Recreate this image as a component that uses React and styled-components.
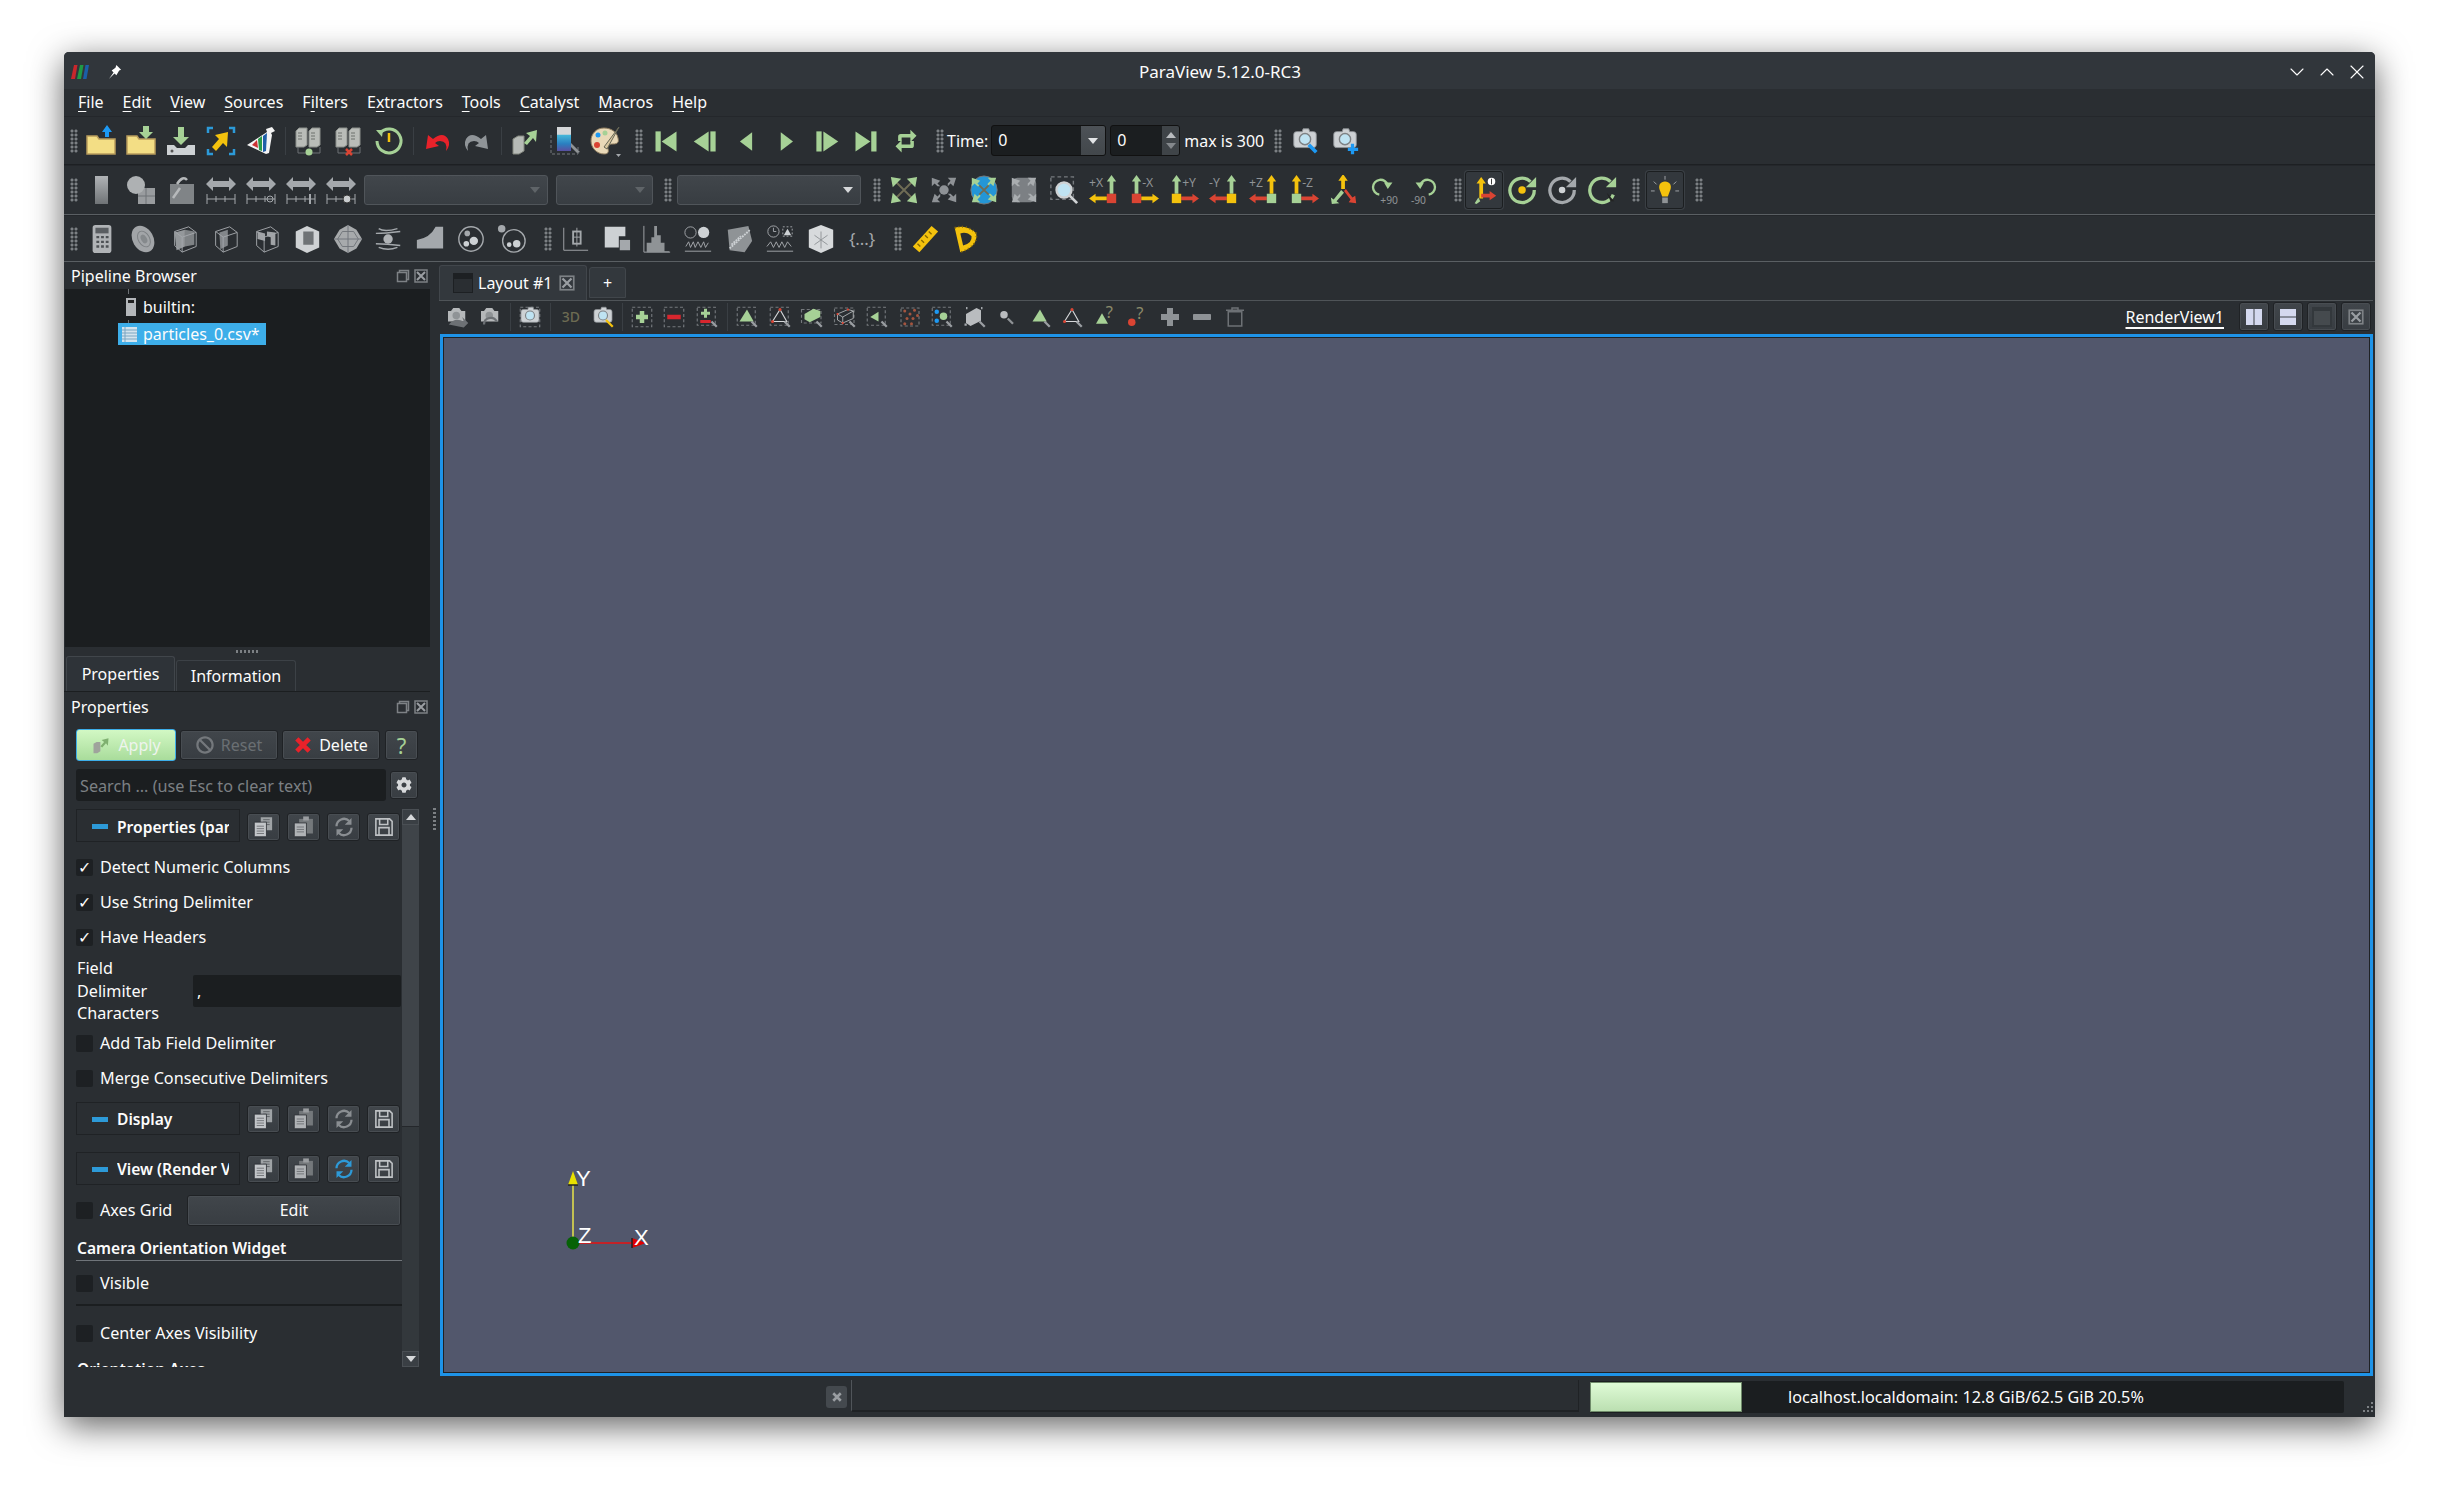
import React from 'react'
import styled, { createGlobalStyle } from 'styled-components'
import { ChevronDown, ChevronUp, X } from 'lucide-react'
import { FaCog, FaBan } from 'react-icons/fa'

const GREEN = '#a6d196'
const YEL = '#f4c20d'
const BLUE = '#1d99f3'
const RED = '#da4433'
const GREY = '#a4a8ac'
const LIGHT = '#cdd1d4'
const DIM = '#8f9396'

const Global = createGlobalStyle`
  html, body { margin: 0; padding: 0; background: #fff; }
  body { font-family: "Noto Sans", sans-serif; font-size: 16px; line-height: 22px; color: #fcfcfc; }
  text { font-family: "Noto Sans", sans-serif; }
  u { text-underline-offset: 3px; text-decoration-thickness: 1px; }
`

const Page = styled.div`
  width: 2440px;
  height: 1494px;
  padding: 52px 65px 77px 64px;
  box-sizing: border-box;
  overflow: hidden;
`
const Win = styled.div`
  width: 2311px;
  height: 1365px;
  display: flex;
  flex-direction: column;
  background: #2a2e32;
  border-radius: 5px 5px 0 0;
  box-shadow: 0 9px 34px rgba(0, 0, 0, 0.62), inset 0 1px 0 #5a5f63;
  overflow: hidden;
`
const TitleBar = styled.div`
  height: 37px;
  flex: none;
  display: grid;
  grid-template-columns: 1fr auto 1fr;
  align-items: center;
  background: #31363b;
  padding: 2px 6px 0 7px;
  box-sizing: border-box;
  font-size: 17px;
`
const TitleLeft = styled.div`
  display: flex;
  align-items: center;
  gap: 18px;
`
const TitleBtns = styled.div`
  display: flex;
  justify-content: flex-end;
  gap: 6px;
`
const MenuBar = styled.div`
  height: 27px;
  flex: none;
  display: flex;
  align-items: center;
  gap: 19px;
  padding: 0 0 2px 14px;
  box-sizing: border-box;
`
const Toolbar = styled.div`
  height: ${p => p.$h}px;
  flex: none;
  box-sizing: border-box;
  display: flex;
  align-items: center;
  padding-left: 3px;
  border-bottom: 1px solid ${p => p.$line};
  border-top: 1px solid #24272b;
`
const Grip = styled.div`
  width: 8px;
  height: 24px;
  flex: none;
  margin: ${p => p.$m || '0 3px'};
  background: radial-gradient(circle at center, #7c8084 1.4px, transparent 1.7px) 0 0 / 4px 4px;
`
const Slot = styled.div`
  width: ${p => p.$w || 40}px;
  flex: none;
  display: flex;
  align-items: center;
  justify-content: center;
`
const BoxedSlot = styled(Slot)`
  width: 38px;
  height: 38px;
  box-sizing: border-box;
  background: #33383d;
  border: 1px solid #1b1e20;
  border-radius: 3px;
  box-shadow: 0 0 0 1px #3a3f44;
`
const Sep = styled.div`
  width: ${p => p.$w || 8}px;
  flex: none;
  height: 28px;
  background: linear-gradient(#3a3f44, #3a3f44) center / 1px 100% no-repeat;
`
const Combo = styled.div`
  width: ${p => p.$w}px;
  height: 30px;
  flex: none;
  margin: ${p => p.$m};
  box-sizing: border-box;
  background: linear-gradient(#41464b, #383d42);
  border: 1px solid #50555a;
  border-radius: 3px;
  display: flex;
  align-items: center;
  justify-content: flex-end;
  padding-right: 7px;
`
const Caret = styled.div`
  width: 0;
  height: 0;
  border-left: 5px solid transparent;
  border-right: 5px solid transparent;
  border-top: 6px solid ${p => p.$c};
`
const ToolText = styled.span`
  flex: none;
  margin: ${p => p.$m};
`
const TimeCombo = styled.div`
  width: 115px;
  height: 31px;
  flex: none;
  box-sizing: border-box;
  display: flex;
  margin: 0 4px 0 3px;
  background: #1b1e20;
  border: 1px solid #111;
  border-radius: 3px;
  overflow: hidden;
`
const TimeValue = styled.div`
  flex: 1;
  padding: 3px 0 0 6px;
`
const TimeArrow = styled.div`
  width: 24px;
  background: linear-gradient(#4d5257, #42474b);
  display: flex;
  align-items: center;
  justify-content: center;
`
const Spin = styled(TimeCombo)`
  width: 70px;
  margin: 0 4px 0 0;
`
const SpinBtns = styled.div`
  width: 17px;
  background: #3f4448;
  display: flex;
  flex-direction: column;
  align-items: center;
  justify-content: center;
  gap: 5px;
`
const CaretUp = styled(Caret)`
  border-top: none;
  border-bottom: 6px solid ${p => p.$c};
`
const Main = styled.div`
  flex: 1;
  min-height: 0;
  display: flex;
`
const LeftDock = styled.div`
  width: 366px;
  flex: none;
  display: flex;
  flex-direction: column;
`
const DockTitle = styled.div`
  height: ${p => p.$h}px;
  flex: none;
  box-sizing: border-box;
  display: flex;
  align-items: center;
  justify-content: space-between;
  padding: 1px 1px 0 7px;
`
const DockIcons = styled.div`
  display: flex;
  gap: 2px;
`
const Tree = styled.div`
  height: 358px;
  flex: none;
  margin-left: 1px;
  background: #1b1e20;
  position: relative;
`
const TreeLine = styled.div`
  position: absolute;
  left: 63px;
  top: ${p => p.$t}px;
  width: 1px;
  height: ${p => p.$h}px;
  background: #6d7175;
`
const TreeRow = styled.div`
  height: ${p => p.$h}px;
  display: flex;
  align-items: center;
  gap: ${p => p.$gap}px;
  margin: ${p => p.$m};
  width: ${p => p.$w};
  background: ${p => p.$sel ? '#3daee9' : 'transparent'};
  padding-left: 4px;
  box-sizing: border-box;
`
const HSplit = styled.div`
  height: 9px;
  flex: none;
  display: flex;
  justify-content: center;
  align-items: center;
`
const HDots = styled.div`
  width: 22px;
  height: 3px;
  background: repeating-linear-gradient(90deg, #7c8084 0 2px, transparent 2px 4px);
`
const TabRow = styled.div`
  height: 36px;
  flex: none;
  display: flex;
  align-items: flex-end;
  padding-left: 2px;
  gap: 1px;
  border-bottom: 1px solid #1b1e20;
  box-sizing: border-box;
`
const DockTab = styled.div`
  height: ${p => p.$on ? 35 : 31}px;
  width: ${p => p.$w}px;
  box-sizing: border-box;
  display: flex;
  align-items: center;
  justify-content: center;
  background: ${p => p.$on ? '#2e3338' : '#2a2e32'};
  border: 1px solid ${p => p.$on ? '#41464b' : '#3c4146'};
  border-bottom: none;
  border-radius: 3px 3px 0 0;
`
const Props = styled.div`
  flex: 1;
  padding-left: 12px;
  min-height: 0;
  font-size: 16.2px;
`
const BtnRow = styled.div`
  display: flex;
  gap: 4px;
  margin-top: 9px;
  height: 32px;
  align-items: center;
`
const PushBtn = styled.div`
  width: ${p => p.$w}px;
  height: ${p => p.$h || 30}px;
  flex: none;
  box-sizing: border-box;
  display: flex;
  align-items: center;
  justify-content: center;
  gap: 7px;
  background: linear-gradient(#41464b, #383d42);
  border: 1px solid #1f2225;
  box-shadow: inset 0 0 0 1px #484d52;
  border-radius: 3px;
  color: ${p => p.$c || '#fcfcfc'};
  font-size: ${p => p.$fs || 16}px;
  margin: ${p => p.$m || 0};
`
const ApplyBtn = styled(PushBtn)`
  background: linear-gradient(#d2f8c4, #a9dc9b);
  border: 1px solid #3daee9;
  box-shadow: none;
  color: #eef4ee;
`
const SearchRow = styled.div`
  display: flex;
  align-items: center;
  gap: 4px;
  margin-top: 8px;
`
const SearchInput = styled.div`
  width: 310px;
  height: 32px;
  box-sizing: border-box;
  background: #1b1e20;
  border-radius: 3px;
  display: flex;
  align-items: center;
  padding: 1px 0 0 4px;
  color: #7c8084;
`
const ScrollWrap = styled.div`
  display: flex;
  margin-top: 8px;
  height: 558px;
`
const Content = styled.div`
  width: 326px;
  flex: none;
  overflow: hidden;
`
const Scrollbar = styled.div`
  width: 17px;
  flex: none;
  background: #33383c;
  display: flex;
  flex-direction: column;
`
const ScrollEnd = styled.div`
  height: 16px;
  flex: none;
  box-sizing: border-box;
  display: flex;
  align-items: center;
  justify-content: center;
  background: #3a3f44;
  border: 1px solid #4a4f54;
`
const ScrollHandle = styled.div`
  height: 301px;
  flex: none;
  background: #3f4449;
  border-bottom: 1px solid #24272b;
`
const ScrollTrack = styled.div`
  flex: 1;
`
const Group = styled.div`
  display: flex;
  align-items: center;
  margin-top: ${p => p.$mt || 0}px;
  height: 33px;
`
const GroupHead = styled.div`
  width: 164px;
  height: 33px;
  flex: none;
  box-sizing: border-box;
  border: 1px solid #1f2225;
  display: flex;
  align-items: center;
  gap: 9px;
  padding: 2px 0 0 15px;
  margin-right: 7px;
`
const GroupLabel = styled.div`
  width: 112px;
  font-size: 15.6px;
  font-weight: 600;
  overflow: hidden;
  white-space: nowrap;
`
const Minus = styled.div`
  width: 16px;
  height: 5px;
  flex: none;
  background: #2d9ad8;
`
const GroupBtns = styled.div`
  display: flex;
  gap: 7px;
  margin-top: 2px;
`
const CheckList = styled.div`
  margin-top: 7.5px;
`
const CheckRow = styled.div`
  height: 35px;
  display: flex;
  align-items: center;
  gap: 7px;
`
const CheckBox = styled.div`
  width: 17px;
  height: 17px;
  flex: none;
  background: #1d2023;
  border-radius: 2px;
  display: flex;
  align-items: center;
  justify-content: center;
  font-size: 16px;
  line-height: 17px;
`
const FieldRow = styled.div`
  display: flex;
  align-items: center;
  height: 69px;
  margin-top: 2px;
`
const FieldLabel = styled.div`
  width: 116px;
  flex: none;
  line-height: 22.5px;
  padding-left: 1px;
`
const FieldInput = styled.div`
  width: 208px;
  height: 32px;
  background: #1b1e20;
  border-radius: 2px;
  padding-left: 4px;
  box-sizing: border-box;
  line-height: 32px;
`
const AxesRow = styled(CheckRow)`
  height: 31px;
  margin-top: 10px;
`
const SectionHead = styled.div`
  height: 35px;
  box-sizing: border-box;
  line-height: 44px;
  font-size: 15.6px;
  font-weight: 600;
  padding-left: 1px;
  border-bottom: 1px solid #70757a;
  margin-bottom: 5px;
`
const ClipHead = styled.div`
  font-size: 15.6px;
  font-weight: 600;
  padding-left: 1px;
  margin-top: 7px;
`
const Rule = styled.div`
  height: 2px;
  background: #1b1e20;
  margin: 3px 0 10px;
`
const VSplit = styled.div`
  width: 9px;
  flex: none;
  display: flex;
  align-items: center;
  justify-content: center;
`
const VDots = styled.div`
  width: 3px;
  height: 22px;
  background: repeating-linear-gradient(#7c8084 0 2px, transparent 2px 4px);
`
const Center = styled.div`
  flex: 1;
  min-width: 0;
  display: flex;
  flex-direction: column;
  padding-right: 2px;
`
const ViewTabs = styled.div`
  height: 38px;
  flex: none;
  display: flex;
  align-items: flex-end;
  gap: 2px;
`
const ViewTab = styled.div`
  width: 148px;
  height: 35px;
  box-sizing: border-box;
  background: #33383d;
  border: 1px solid #41464b;
  border-bottom: none;
  border-radius: 3px 3px 0 0;
  display: flex;
  align-items: center;
  gap: 5px;
  padding-left: 13px;
  white-space: nowrap;
`
const AddTab = styled.div`
  width: 37px;
  height: 31px;
  margin-bottom: 2px;
  box-sizing: border-box;
  background: #33383d;
  border: 1px solid #41464b;
  border-radius: 3px 3px 0 0;
  display: flex;
  align-items: center;
  justify-content: center;
`
const TabIcon = styled.div`
  width: 20px;
  height: 20px;
  flex: none;
  box-sizing: border-box;
  background: #2a2e32;
  border-top: 6px solid #1d2023;
  border-left: 1px solid #1d2023;
  border-right: 1px solid #1d2023;
  border-bottom: 1px solid #1d2023;
`
const RenderBar = styled.div`
  height: 34px;
  flex: none;
  box-sizing: border-box;
  display: flex;
  align-items: center;
  padding: 0 2px 2px 2px;
  border-top: 1px solid #4f5458;
`
const ThreeD = styled.div`
  width: 32.5px;
  flex: none;
  text-align: center;
  color: #6d6b52;
  font-size: 14px;
  font-weight: 500;
`
const ViewName = styled.div`
  margin-left: auto;
  margin-right: 15px;
  text-decoration: underline;
  text-decoration-thickness: 2px;
  text-underline-offset: 4px;
`
const ViewBtns = styled.div`
  display: flex;
  gap: 4px;
`
const Viewport = styled.div`
  flex: 1;
  min-height: 0;
  margin-left: 1px;
  box-sizing: border-box;
  background: #52576c;
  border: 3px solid #1e93e8;
  box-shadow: inset 0 0 0 1px #1f2225;
  position: relative;
`
const AxesOverlay = styled.svg`
  position: absolute;
  left: 110px;
  bottom: 108px;
  text { font-family: "Liberation Sans", sans-serif; font-size: 22px; fill: #fff; }
`
const Status = styled.div`
  height: 41px;
  flex: none;
  display: flex;
  align-items: center;
`
const StatusClose = styled.div`
  width: 21px;
  height: 22px;
  margin-left: 762px;
  flex: none;
  background: #44494e;
  border-radius: 3px;
  display: flex;
  align-items: center;
  justify-content: center;
`
const StatusMsg = styled.div`
  width: 728px;
  height: 32px;
  margin: -1px 0 0 4px;
  box-sizing: border-box;
  border-left: 1px solid #50555a;
  border-bottom: 2px solid #1f2225;
  border-right: 1px solid #1f2225;
  flex: none;
`
const Memory = styled.div`
  width: 754px;
  height: 32px;
  margin-left: 11px;
  flex: none;
  background: #1b1e20;
  display: flex;
  align-items: center;
  border-radius: 2px;
`
const MemoryFill = styled.div`
  width: 152px;
  height: 30px;
  flex: none;
  background: linear-gradient(#dffbd6, #bbdfb1);
  border: 1px solid #6f8a6a;
  box-sizing: border-box;
`
const MemoryText = styled.div`
  margin-left: 46px;
  font-size: 16.2px;
`
const ResizeGrip = styled.svg`
  margin: 22px 0 0 15px;
  flex: none;
`

const Svg = ({ s = 32, children }) => <svg width={s} height={s} viewBox="0 0 32 32">{children}</svg>

const T = ({ x, y, c = DIM, z = 13, children }) => <text x={x} y={y} fontSize={z} fill={c}>{children}</text>

// arrow pointing up, shaft x, from y0 to y1
const up = (x, y0, y1, c) => <path d={`M${x - 2} ${y0}V${y1 + 6}h-3l5-7 5 7h-3V${y0}z`} fill={c} />
const left = (x0, x1, y, c) => <path d={`M${x0} ${y - 2}H${x1 + 6}v-3l-7 5 7 5v-3H${x0}z`} fill={c} />
const right = (x0, x1, y, c) => <path d={`M${x0} ${y - 2}H${x1 - 6}v-3l7 5-7 5v-3H${x0}z`} fill={c} />

const axisIcon = (label, labelLeft, upC, hC, boxC) => labelLeft ? (
  <>
    <T x={0} y={13}>{label}</T>
    {up(24, 20, 1, upC)}
    {left(19, 1, 25, hC)}
    <rect x={19} y={20} width={10} height={10} fill={boxC} />
  </>
) : (
  <>
    {up(8, 20, 1, upC)}
    <T x={14} y={13}>{label}</T>
    {right(13, 31, 25, hC)}
    <rect x={3} y={20} width={10} height={10} fill={boxC} />
  </>
)

const folder = (arrow) => (
  <>
    <path d="M2 11h10l2 3h16v15H2z" fill="#f3de85" stroke="#b89c5c" strokeWidth="1.5" />
    {arrow}
  </>
)
const server = (x) => (
  <g>
    <path d={`M${x} 6l3-3h8v17l-3 2h-8z`} fill="#b9bcb8" stroke="#8b8f8b" />
    <path d={`M${x + 2} 8h4M${x + 2} 11h4M${x + 2} 14h4`} stroke="#6d706c" />
  </g>
)
const cubeOutline = <path d="M6 8l15-5 8 6v15l-15 6-8-7z M6 8l8 6v16 M14 14l15-5" fill="none" stroke={GREY} strokeWidth="1" />
const ruler = (extra) => (
  <>
    <path d="M8 3L1 10l7 7v-4h16v4l7-7-7-7v4H8z" fill={GREY} />
    <path d="M2 25h28M2 20v10M30 20v10M11 22v6M20 22v6" stroke={GREY} fill="none" />
    {extra}
  </>
)
const copyDocs = (
  <Svg s={26}>
    <path d="M12 4h14v16H12z" fill="#9fa3a6" />
    <path d="M15 7h8M15 10h8M15 13h8" stroke="#55595c" />
    <path d="M4 10h15v18H4z" fill="#c2c5c8" stroke="#2a2e32" />
    <path d="M7 15h9M7 18h9M7 21h9M7 24h9" stroke="#66696c" />
  </Svg>
)
const pasteDocs = (
  <Svg s={26}>
    <path d="M10 6h17v18H10z" fill="#74787b" />
    <path d="M15 3h7v5h-7z" fill="#9a9da0" />
    <path d="M4 11h15v17H4z" fill="#b0b3b6" stroke="#2a2e32" />
    <path d="M7 16h9M7 19h9M7 22h9" stroke="#66696c" />
  </Svg>
)
const refresh = (c) => (
  <Svg s={24}>
    <path d="M6 15a10 10 0 0 1 17-7" fill="none" stroke={c} strokeWidth="3" />
    <path d="M26 4v9h-9z" fill={c} />
    <path d="M26 17a10 10 0 0 1-17 7" fill="none" stroke={c} strokeWidth="3" />
    <path d="M6 28v-9h9z" fill={c} />
  </Svg>
)
const floppy = (
  <Svg s={20}>
    <path d="M3 3h22l4 4v22H3z M9 3v9h13V3 M8 29V17h16v12" fill="none" stroke="#bfc2c5" strokeWidth="2.5" />
  </Svg>
)
const floatIcon = (
  <Svg s={16}>
    <path d="M5 9h18v18H5z M9 9V5h18v18h-4" fill="none" stroke="#7d8185" strokeWidth="3" />
  </Svg>
)
const closeIcon = (s = 16) => (
  <Svg s={s}>
    <rect x="4" y="4" width="24" height="24" fill="none" stroke="#7d8185" strokeWidth="3" />
    <path d="M8 8l16 16M24 8L8 24" stroke="#9a9ea2" strokeWidth="4" />
  </Svg>
)
const redX = (
  <Svg s={18}>
    <path d="M5 5l22 22M27 5L5 27" stroke="#e8222a" strokeWidth="8" />
  </Svg>
)
const dashed = (d = 'M3 3h26v26H3z') => <path d={d} fill="none" stroke="#75797d" strokeDasharray="4 3" strokeWidth="1.5" />
const handle = <path d="M22 22l7 7" stroke="#9a9ea2" strokeWidth="3" />
const tri = (c) => <path d="M16 6l9 16H6z" fill={c} />
const triOutline = (
  <>
    <path d="M16 6l9 16H6z" fill="none" stroke="#d5d7d9" strokeWidth="1.5" />
    <circle cx="16" cy="6" r="2" fill={RED} />
    <circle cx="6" cy="22" r="2" fill={RED} />
  </>
)
const camera = (
  <>
    <path d="M7 6h6l1-3h6l1 3h4q3 0 3 3v11q0 3-3 3H7q-3 0-3-3V9q0-3 3-3z" fill={LIGHT} stroke="#8e9295" />
    <circle cx="16" cy="14" r="6" fill="#bfe3f2" stroke="#7e8285" strokeWidth="1.5" />
  </>
)

const row1 = [
  ['open', folder(up(22, 12, 1, BLUE))],
  ['recent', folder(<path d="M18 1h6v6h4l-7 7-7-7h4z" fill={GREEN} />)],
  ['load', <><path d="M13 2h6v10h5l-8 8-8-8h5z" fill={GREEN} /><path d="M2 20h7l3 3h8l3-3h7v10H2z" fill={LIGHT} /><circle cx="7" cy="26" r="1.5" fill="#555" /></>],
  ['goto', <><path d="M3 8V3h5M24 3h5v5M29 24v5h-5M8 29H3v-5" fill="none" stroke="#2c9ad8" strokeWidth="2.5" /><path d="M23 7l-1 15-4-4-7 8-4-4 7-8-4-4z" fill={YEL} /></>],
  ['flask', <><path d="M2 20L22 7l-1-3 6-2 3 4-4 2 1 2-3 18-3 1z" fill="#f4f4f4" /><path d="M7 20l5-5 1 8z" fill="#c33" /><path d="M13 14l4-3 0 15-3-1z" fill="#2a9a48" /><path d="M18 11l4-3-1 18-3 1z" fill="#1f5fa8" /></>],
  'sep',
  ['connect', <>{server(3)}{server(16)}<path d="M5 22v6h22v-6" fill="none" stroke="#6d7175" /><circle cx="16" cy="27" r="3.5" fill={GREEN} /></>],
  ['disconnect', <>{server(3)}{server(16)}<path d="M5 22v6h22v-6" fill="none" stroke="#6d7175" /><path d="M13 24l6 6M19 24l-6 6" stroke={RED} strokeWidth="2.5" /></>],
  ['timer', <><path d="M7 8a12 12 0 1 1-3 8" fill="none" stroke={GREEN} strokeWidth="3" /><path d="M3 5l7 0-1 7z" fill={GREEN} /><path d="M16 8v9" stroke={YEL} strokeWidth="2.5" /></>],
  'sep',
  ['undo', <g transform="translate(3 0)"><path d="M9 14q10-8 15 0 3 6-2 12 2-10-6-10-3 0-5 2l4 3-13 3 2-14z" fill="#e8222a" /></g>],
  ['redo', <g transform="translate(-3 0)"><path d="M23 14q-10-8-15 0-3 6 2 12-2-10 6-10 3 0 5 2l-4 3 13 3-2-14z" fill="#8f9498" /></g>],
  'sep',
  ['apply', <><path d="M4 14l5-3h6v15l-5 3H4z" fill="#b6bab6" stroke="#83877f" /><path d="M15 18l6-7-4-3 11-3-1 12-3-4-6 7z" fill={GREEN} /></>],
  ['colors', <><rect x="8" y="2" width="14" height="24" fill="url(#cbar)" /><path d="M2 10v19h27v-8" fill="none" stroke="#75797d" strokeDasharray="3 2" /><path d="M22 18l9 9-3 1-6-6z" fill={DIM} /></>],
  ['palette', <><path d="M15 3C7 3 2 9 2 16s6 13 13 13c4 0 5-2 4-5s1-5 5-5c5 0 6-2 5-6-1-6-7-10-14-10z" fill="#e9d9b8" stroke="#8e7c5f" /><circle cx="9" cy="10" r="2.5" fill={BLUE} /><circle cx="16" cy="8" r="2.5" fill={GREEN} /><circle cx="8" cy="20" r="3" fill={RED} /><path d="M30 2l-12 22-3-2z" fill="#d9c7a0" stroke="#665" /><path d="M27 29h5l-2.5 3z" fill={GREY} /></>]
]

const vcr = [
  <><rect x="4" y="5" width="6" height="23" fill={GREEN} /><path d="M28 5v23L11 16.5z" fill={GREEN} /></>,
  <><path d="M19 5v23L2 16.5z" fill={GREEN} /><rect x="21" y="5" width="6" height="23" fill={GREEN} /></>,
  <path d="M23 6v21L9 16.5z" fill={GREEN} />,
  <path d="M10 6v21l14-10.500z" fill={GREEN} />,
  <><rect x="5" y="5" width="6" height="23" fill={GREEN} /><path d="M13 5v23l17-11.500z" fill={GREEN} /></>,
  <><path d="M4 5v23l17-11.500z" fill={GREEN} /><rect x="22" y="5" width="6" height="23" fill={GREEN} /></>,
  <><path d="M7 16v-5a3 3 0 0 1 3-3h11V3l7 7-7 7v-5H11v4z" fill={GREEN} /><path d="M25 16v5a3 3 0 0 1-3 3H11v5l-7-7 7-7v5h10v-4z" fill={GREEN} /></>
]

const row2a = [
  <rect x="10" y="2" width="13" height="28" fill="url(#bar)" />,
  <><rect x="13" y="14" width="17" height="16" fill="#999c9f" /><path d="M13 22h17M21 14v16" stroke="#6f7376" /><circle cx="11" cy="11" r="9" fill="#aeb1b3" /></>,
  <><rect x="5" y="10" width="24" height="20" fill="#808487" /><path d="M8 24l7-10M12 10q6-9 10-4" stroke="#b6b9bb" strokeWidth="2.5" fill="none" /></>,
  ruler(),
  ruler(<circle cx="25" cy="25" r="3" fill="none" stroke={GREY} />),
  ruler(<path d="M25 20v10" stroke={GREY} strokeWidth="2" />),
  ruler(<circle cx="22" cy="25" r="4" fill="#c9ccce" stroke="#333" />)
]

const inArrows = (c) => <path d="M3 3l9 3-3 3 3 3-3-0-3-3-3 3zM29 3l-3 9-3-3-3 3 0-3 3-3-3-3zM3 29l3-9 3 3 3-3 0 3-3 3 3 3zM29 29l-9-3 3-3-3-3 3 0 3 3 3-3z" fill={c} />
const outArrows = <><path d="M8 8l16 16M24 8L8 24" stroke="#6f6c55" strokeWidth="2" /><path d="M2 2l11 2-9 9zM30 2l-2 11-9-9zM2 30l2-11 9 9zM30 30l-11-2 9-9z" fill={GREEN} /></>

const row2b = [
  outArrows,
  <>{inArrows('#8e9296')}<circle cx="16" cy="16" r="5" fill="#8e9296" /></>,
  <><ellipse cx="16" cy="16" rx="14" ry="15" fill="#2496d6" stroke="#777" />{inArrows(GREEN)}<path d="M11 11l10 10M21 11L11 21" stroke="#6f6c55" strokeWidth="2" /></>,
  <><rect x="3" y="3" width="26" height="26" rx="6" fill="#7c8084" />{inArrows('#a9adb0')}</>,
  <>{dashed('M2 2h24v24H2z')}<circle cx="16" cy="16" r="8" fill="#bfe3f2" stroke="#cfd2d4" strokeWidth="2.5" /><path d="M22 22l8 8" stroke="#cfd2d4" strokeWidth="3" /></>,
  axisIcon('+X', true, GREEN, YEL, RED),
  axisIcon('-X', false, GREEN, YEL, RED),
  axisIcon('+Y', false, GREEN, RED, YEL),
  axisIcon('-Y', true, GREEN, RED, YEL),
  axisIcon('+Z', true, YEL, RED, GREEN),
  axisIcon('-Z', false, YEL, RED, GREEN),
  <>{up(15, 15, 0, YEL)}<path d="M13 16L5 26l-3-2 1 7 8-1-3-2 8-9z" fill={GREEN} /><path d="M18 15l7 9 3-2 1 8-8-1 2-3-7-9z" fill={RED} /></>,
  <><path d="M20 11a8 8 0 1 0-9 10" fill="none" stroke={GREEN} strokeWidth="2.5" /><path d="M25 8h-9l4 7z" fill={GREEN} /><T x={12} y={31} z={11}>+90</T></>,
  <><path d="M12 11a8 8 0 1 1 9 10" fill="none" stroke={GREEN} strokeWidth="2.5" /><path d="M7 8h9l-4 7z" fill={GREEN} /><T x={2} y={31} z={11}>-90</T></>
]

const centerAxes = <><path d="M12 28l-4 3-2-1 4-6z" fill={GREEN} />{up(13, 25, 3, YEL)}{right(13, 28, 22, RED)}<circle cx="24" cy="7" r="4" fill="#fff" /><path d="M24 4v6" stroke="#333" /></>
const spin1 = <><path d="M24 7a13 13 0 1 0 4 9" fill="none" stroke={GREEN} strokeWidth="3.5" /><path d="M30 2v11H19z" fill={GREEN} /><circle cx="15" cy="16" r="4" fill={YEL} /></>
const spin2 = <><path d="M24 7a13 13 0 1 0 4 9" fill="none" stroke={GREY} strokeWidth="3.5" /><path d="M30 2v11H19z" fill={GREY} /><circle cx="15" cy="16" r="3.5" fill={LIGHT} /></>
const spin3 = <><path d="M24 7a13 13 0 1 0 3 14" fill="none" stroke={GREEN} strokeWidth="3.5" /><path d="M30 2v11H19z" fill={GREEN} /><path d="M20 19l8 9-4 0z" fill="#222" /></>
const bulb = <><path d="M16 1v4M4 7l3 3M28 7l-3 3M1 17h4M27 17h4" stroke={GREY} /><path d="M16 7c-5 0-7 4-6 8l3 8h6l3-8c1-4-1-8-6-8z" fill={YEL} /><rect x="13" y="24" width="6" height="6" fill={DIM} /></>

const row3a = [
  <><rect x="6" y="1" width="20" height="30" rx="3" fill="#b0b3b6" /><rect x="9" y="4" width="14" height="6" fill="#5a5e62" /><path d="M10 14h3M15 14h3M20 14h3M10 19h3M15 19h3M20 19h3M10 24h3M15 24h3M20 24h3" stroke="#4d5155" strokeWidth="2.5" /></>,
  <><ellipse cx="16" cy="16" rx="11" ry="15" transform="rotate(-30 16 16)" fill="#a2a5a8" /><ellipse cx="17" cy="16" rx="6" ry="9" transform="rotate(-30 17 16)" fill="none" stroke="#7b7f82" /><ellipse cx="17" cy="16" rx="3" ry="5" transform="rotate(-30 17 16)" fill="#85898c" /></>,
  <><path d="M6 9l11-3v18l-9 4z" fill="#94989b" /><path d="M17 6l10 2v14l-10 2z" fill="#7e8285" />{cubeOutline}</>,
  <><path d="M10 9l9-3v17l-8 4z" fill="#82868a" />{cubeOutline}</>,
  <><path d="M7 8l8 2v8l-8-2zM17 8l9 1v14l-5-1v-8l-4-1z" fill="#a0a3a6" />{cubeOutline}</>,
  <><path d="M4 8l12-6 13 6v17l-13 6-12-6z" fill="#cfd2d4" /><path d="M12 8l11 0v14l-11 0z" fill="#6f7376" /></>,
  <><path d="M16 1l9 5 6 10-6 10-9 5-9-5-6-10 6-10z" fill="#a7aaac" /><path d="M10 8h12l5 8-5 8H10l-5-8z M16 1v30M1 16h30" fill="none" stroke="#70747a" /></>,
  <><circle cx="15" cy="16" r="5" fill="#b0b3b6" /><path d="M5 5q6 4 20 0M2 10q10 0 26-2M5 25q10 4 20 0M2 21q12 0 26 2" fill="none" stroke={GREY} strokeWidth="1.5" /></>,
  <path d="M2 17q14-2 20-14h8v23H2z" fill={GREY} />,
  <><circle cx="16" cy="16" r="13" fill="none" stroke={GREY} strokeWidth="1.5" /><circle cx="19" cy="18" r="4.500" fill={LIGHT} /><circle cx="11" cy="21" r="3" fill={LIGHT} /><circle cx="12" cy="10" r="3" fill={GREY} /></>,
  <><circle cx="18" cy="18" r="12" fill="none" stroke={GREY} strokeWidth="1.5" /><circle cx="21" cy="21" r="4" fill={LIGHT} /><circle cx="13" cy="22" r="2.500" fill={LIGHT} /><circle cx="5" cy="5" r="4" fill={GREY} /></>
]
const row3b = [
  <><path d="M4 4v24h26" fill="none" stroke={GREY} /><rect x="14" y="8" width="8" height="13" fill="none" stroke={GREY} strokeWidth="2" /><path d="M18 4v20M14 14h8" stroke={GREY} /></>,
  <><path d="M4 3h22v10h-7v12H4z" fill={LIGHT} /><rect x="20" y="17" width="11" height="11" fill={GREY} /></>,
  <><path d="M2 2v28h28" fill="none" stroke={GREY} /><path d="M5 29V20h5v-6h3V2h3v10h4v8h4v9h5v1H5z" fill="#8f9396" /></>,
  <><circle cx="8" cy="9" r="6" fill="none" stroke={GREY} /><circle cx="22" cy="9" r="6" fill={LIGHT} /><path d="M3 24l3-5 2 6 3-6 2 6 3-6 3 6 3-6 2 6 3-5M2 29h28" fill="none" stroke={GREY} /></>,
  <><path d="M4 6l22-4 4 16-8 12-16-2z" fill="#8f9396" /><path d="M6 26L28 6M8 22l10-9" stroke={LIGHT} strokeWidth="2" strokeDasharray="2 1" /></>,
  <><circle cx="9" cy="8" r="6" fill="none" stroke={GREY} /><path d="M9 4v4h3" stroke={GREY} fill="none" /><path d="M19 3h10v10H19z" fill="none" stroke={GREY} strokeDasharray="2 2" /><path d="M24 5l4 7h-8z" fill={LIGHT} /><path d="M2 24l4-5 3 6 3-6 3 6 3-6 3 6 3-6 4 5M2 29h28" fill="none" stroke={GREY} /></>,
  <><path d="M16 1l13 5v19l-13 6-13-6V6z" fill="#d7dadc" /><path d="M16 8v18M9 12l14 10M23 12L9 22" stroke="#8f9396" /></>,
  <T x={2} y={22} z={18} c={GREY}>{'{...}'}</T>
]
const measures = [
  <><path d="M3 24L23 2l7 6-20 22z" fill={YEL} /><path d="M8 21l3 3M12 17l3 3M16 12l3 3M20 8l3 3" stroke="#8a6a00" strokeWidth="1.5" /></>,
  <><path d="M5 4L11 30Q30 24 28 10 18 0 5 4z" fill={YEL} /><path d="M5 4Q18 0 28 10 30 24 11 30" fill="none" stroke="#8a6a00" strokeDasharray="1 3" strokeWidth="2" /><path d="M11 10L14 23Q24 20 23 13 18 8 11 10z" fill="#2a2e32" /></>
]

const render = [
  <><path d="M8 8l3-4h8l3 4h5v14H4V8z" fill="#b5b8ba" /><circle cx="15" cy="14" r="5" fill="#8f9396" /><path d="M5 26q8-10 20-4l-2-6 8 8-6 6z" fill="#6d7175" /></>,
  <><path d="M8 8l3-4h8l3 4h5v14H4V8z" fill="#b5b8ba" /><circle cx="15" cy="14" r="5" fill="#8f9396" /><path d="M8 26a9 9 0 0 1 17-4" fill="none" stroke="#6d7175" strokeWidth="3" /></>,
  'sep',
  <>{dashed()}{camera}</>,
  'sep',
  '3D',
  <>{camera}<path d="M20 20l9 9" stroke={YEL} strokeWidth="3" /></>,
  'sep6',
  <>{dashed()}<path d="M13 8h6v5h5v6h-5v5h-6v-5H8v-6h5z" fill={GREEN} /></>,
  <>{dashed()}<rect x="7" y="13" width="18" height="6" fill="#d8262e" /></>,
  <>{dashed('M3 3h24v24H3z')}<path d="M12 5h4v4h4v4h-4v4h-4v-4H8V9h4z" fill={GREEN} /><rect x="7" y="20" width="14" height="4" fill="#d8262e" />{handle}</>,
  'sep',
  <>{dashed('M3 3h24v24H3z')}{tri(GREEN)}{handle}</>,
  <>{dashed('M3 3h24v24H3z')}{triOutline}{handle}</>,
  <>{dashed('M2 6h26v18H2z')}<path d="M6 12l12-7 9 3v8l-14 7-7-4z" fill={GREEN} />{handle}</>,
  <>{dashed('M2 4h26v22H2z')}<path d="M6 12l14-6 7 2v10l-14 6-7-4zM6 12l7 4v8M13 16l14-8" fill="none" stroke="#c9ccce" /><circle cx="20" cy="6" r="1.500" fill={RED} /><circle cx="6" cy="12" r="1.500" fill={RED} /><circle cx="13" cy="24" r="1.500" fill={RED} />{handle}</>,
  <>{dashed('M3 3h24v24H3z')}<path d="M18 9v13L7 16z" fill={GREEN} />{handle}</>,
  <>{dashed('M4 4h24v24H4z')}{[[9, 8], [16, 12], [22, 7], [12, 18], [20, 18], [9, 25], [18, 25], [26, 14]].map(([x, y]) => <circle key={x + '-' + y} cx={x} cy={y} r="2" fill="#a4553f" />)}</>,
  <>{dashed('M3 3h24v24H3z')}<circle cx="9" cy="9" r="3" fill={BLUE} /><circle cx="9" cy="21" r="3" fill={BLUE} /><circle cx="18" cy="15" r="5" fill={GREEN} />{handle}</>,
  <><path d="M4 12l14-8 6 3v14L10 28l-6-4z" fill="#b9bcbf" /><path d="M4 4h2M24 4h2M2 26h3" stroke={GREY} strokeWidth="3" />{handle}</>,
  <><circle cx="12" cy="13" r="5" fill="#b9bcbf" /><path d="M17 18l7 7" stroke="#8f9396" strokeWidth="3" /></>,
  <>{tri(GREEN)}{handle}</>,
  <>{triOutline}{handle}</>,
  <><path d="M12 11l8 14H4z" fill={GREEN} /><T x={17} y={17} c="#8a8a6a" z={22}>?</T></>,
  <><circle cx="9" cy="23" r="5" fill={RED} /><T x={15} y={18} c="#8a8a6a" z={22}>?</T></>,
  <path d="M12 4h8v8h8v8h-8v8h-8v-8H4v-8h8z" fill="#8e9296" />,
  <rect x="4" y="12" width="24" height="8" rx="1" fill="#8e9296" />,
  <path d="M7 9h18v19H7zM4 7h24M12 7V4h8v3" fill="none" stroke="#6d7175" strokeWidth="2" />
]

const menus = [['F', 'ile'], ['E', 'dit'], ['V', 'iew'], ['S', 'ources'], ['', 'Filters', 'i'], ['', 'Extractors', 'x'], ['T', 'ools'], ['C', 'atalyst'], ['M', 'acros'], ['H', 'elp']]

const GroupRow = ({ label, mt, reload }) => (
  <Group $mt={mt}>
    <GroupHead><Minus /><GroupLabel>{label}</GroupLabel></GroupHead>
    <GroupBtns>
      <PushBtn $w={33} $h={28}>{copyDocs}</PushBtn>
      <PushBtn $w={33} $h={28}>{pasteDocs}</PushBtn>
      <PushBtn $w={33} $h={28}>{refresh(reload ? '#2d9ad8' : '#8a8e92')}</PushBtn>
      <PushBtn $w={33} $h={28}>{floppy}</PushBtn>
    </GroupBtns>
  </Group>
)

const Check = ({ on, children }) => (
  <CheckRow>
    <CheckBox>{on ? '✓' : ''}</CheckBox>
    {children}
  </CheckRow>
)

const MenuLabel = ({ item }) => {
  const [first, rest, mid] = item
  if (mid) {
    const i = rest.indexOf(mid)
    return <span>{rest.slice(0, i)}<u>{mid}</u>{rest.slice(i + 1)}</span>
  }
  return <span><u>{first}</u>{rest}</span>
}

export default function App() {
  return (
    <Page>
      <Global />
      <svg width="0" height="0" style={{ position: 'absolute' }}>
        <defs>
          <linearGradient id="bar" x1="0" x2="0" y1="0" y2="1">
            <stop offset="0" stopColor="#b0b3b6" />
            <stop offset="1" stopColor="#6f7376" />
          </linearGradient>
          <linearGradient id="cbar" x1="0" x2="0" y1="0" y2="1">
            <stop offset="0.3" stopColor="#d5d7d9" />
            <stop offset="0.35" stopColor="#43b4d8" />
            <stop offset="0.7" stopColor="#2a7fc0" />
            <stop offset="1" stopColor="#5a4fa0" />
          </linearGradient>
        </defs>
      </svg>
      <Win>
        <TitleBar>
          <TitleLeft>
            <svg width="18" height="16" viewBox="0 0 18 16">
              <path d="M3 1h3.500L4 15H0z" fill="#c9272c" />
              <path d="M9 1h3.500L10 15H6z" fill="#1f9a45" />
              <path d="M14.500 1H18l-2.500 14H12z" fill="#1b5fa8" />
            </svg>
            <svg width="15" height="15" viewBox="0 0 16 16">
              <path d="M10 1l5 5-2 1-3 5-2-2-6 6 5-7-2-2 4-3z" fill="#fff" />
            </svg>
          </TitleLeft>
          <span>ParaView 5.12.0-RC3</span>
          <TitleBtns>
            <ChevronDown size={24} strokeWidth={1.1} />
            <ChevronUp size={24} strokeWidth={1.1} />
            <X size={24} strokeWidth={1.1} />
          </TitleBtns>
        </TitleBar>
        <MenuBar>
          {menus.map(m => <MenuLabel key={m[0] + m[1]} item={m} />)}
        </MenuBar>
        <Toolbar $h={49} $line="#1d2023">
          <Grip />
          {row1.map((it, i) => it === 'sep' ? <Sep key={i} /> : <Slot key={i}><Svg>{it[1]}</Svg></Slot>)}
          <Grip $m="0 3px 0 10px" />
          {vcr.map((v, i) => <Slot key={i} $w={40}><Svg s={28}>{v}</Svg></Slot>)}
          <Grip $m="0 2px 0 10px" />
          <ToolText $m="0 0 0 1px">Time:</ToolText>
          <TimeCombo>
            <TimeValue>0</TimeValue>
            <TimeArrow><Caret $c="#e3e5e7" /></TimeArrow>
          </TimeCombo>
          <Spin>
            <TimeValue>0</TimeValue>
            <SpinBtns><CaretUp $c="#b9bcbf" /><Caret $c="#84888c" /></SpinBtns>
          </Spin>
          <ToolText>max is 300</ToolText>
          <Grip $m="0 3px 0 10px" />
          <Slot $w={40}><Svg s={30}>{camera}<path d="M20 20l8 8" stroke={BLUE} strokeWidth="4" /></Svg></Slot>
          <Slot $w={40}><Svg s={30}>{camera}<path d="M24 19v11M19 25h11" stroke={BLUE} strokeWidth="3.500" /></Svg></Slot>
        </Toolbar>
        <Toolbar $h={50} $line="#5a5f63">
          <Grip />
          {row2a.map((v, i) => <Slot key={i}><Svg>{v}</Svg></Slot>)}
          <Combo $w={184} $m="0 0 0 3px"><Caret $c="#5f6468" /></Combo>
          <Combo $w={97} $m="0 0 0 8px"><Caret $c="#5f6468" /></Combo>
          <Grip $m="0 5px 0 11px" />
          <Combo $w={184}><Caret $c="#d6d8da" /></Combo>
          <Grip $m="0 3px 0 12px" />
          {row2b.map((v, i) => <Slot key={i}><Svg s={30}>{v}</Svg></Slot>)}
          <Grip $m="0 3px 0 10px" />
          <BoxedSlot><Svg s={30}>{centerAxes}</Svg></BoxedSlot>
          <Slot><Svg s={30}>{spin1}</Svg></Slot>
          <Slot><Svg s={30}>{spin2}</Svg></Slot>
          <Slot><Svg s={30}>{spin3}</Svg></Slot>
          <Grip $m="0 6px 0 9px" />
          <BoxedSlot><Svg s={30}>{bulb}</Svg></BoxedSlot>
          <Grip $m="0 0 0 11px" />
        </Toolbar>
        <Toolbar $h={47} $line="#5a5f63">
          <Grip />
          {row3a.map((v, i) => <Slot key={i} $w={41}><Svg s={30}>{v}</Svg></Slot>)}
          <Grip $m="0 2px 0 12px" />
          {row3b.map((v, i) => <Slot key={i} $w={41}><Svg s={30}>{v}</Svg></Slot>)}
          <Grip $m="0 3px 0 12px" />
          {measures.map((v, i) => <Slot key={i}><Svg s={30}>{v}</Svg></Slot>)}
        </Toolbar>
        <Main>
          <LeftDock>
            <DockTitle $h={27}>
              Pipeline Browser
              <DockIcons>{floatIcon}{closeIcon()}</DockIcons>
            </DockTitle>
            <Tree>
              <TreeLine $t={0} $h={5} />
              <TreeLine $t={31} $h={3} />
              <TreeRow $gap={4} $h={22} $m="7px 0 0 54px" $w="212px">
                <svg width="16" height="20" viewBox="0 0 16 20">
                  <rect x="3" y="1" width="10" height="18" fill="#b4b7ba" />
                  <rect x="5" y="3" width="6" height="3" fill="#222" />
                </svg>
                builtin:
              </TreeRow>
              <TreeRow $sel $gap={6} $h={22} $m="5px 0 0 53px" $w="148px">
                <svg width="15" height="15" viewBox="0 0 15 15">
                  <path d="M0 0h15v15H0z" fill="#d4e4ee" />
                  <path d="M0 3h15M0 6h15M0 9h15M0 12h15M3 0v15" stroke="#7aa6c2" />
                </svg>
                particles_0.csv*
              </TreeRow>
            </Tree>
            <HSplit><HDots /></HSplit>
            <TabRow>
              <DockTab $on $w={109}>Properties</DockTab>
              <DockTab $w={120}>Information</DockTab>
            </TabRow>
            <DockTitle $h={28}>
              Properties
              <DockIcons>{floatIcon}{closeIcon()}</DockIcons>
            </DockTitle>
            <Props>
              <BtnRow>
                <ApplyBtn $w={100} $h={32}>
                  <Svg s={20}><path d="M4 14l5-3h6v15l-5 3H4z" fill="#9fa39c" /><path d="M15 18l6-7-4-3 11-3-1 12-3-4-6 7z" fill="#7fb070" /></Svg>
                  Apply
                </ApplyBtn>
                <PushBtn $w={98} $c="#6a6f73"><FaBan size={18} color="#74787c" />Reset</PushBtn>
                <PushBtn $w={98}>{redX}Delete</PushBtn>
                <PushBtn $w={33} $c={GREEN} $fs={22} $m="0 0 0 1px">?</PushBtn>
              </BtnRow>
              <SearchRow>
                <SearchInput>Search ... (use Esc to clear text)</SearchInput>
                <PushBtn $w={28} $h={28}><FaCog size={16} color="#d7d9db" /></PushBtn>
              </SearchRow>
              <ScrollWrap>
                <Content>
                  <GroupRow label="Properties (par" />
                  <CheckList>
                    <Check on>Detect Numeric Columns</Check>
                    <Check on>Use String Delimiter</Check>
                    <Check on>Have Headers</Check>
                  </CheckList>
                  <FieldRow>
                    <FieldLabel>Field<br />Delimiter<br />Characters</FieldLabel>
                    <FieldInput>,</FieldInput>
                  </FieldRow>
                  <Check>Add Tab Field Delimiter</Check>
                  <Check>Merge Consecutive Delimiters</Check>
                  <GroupRow label="Display" mt={6} />
                  <GroupRow label="View (Render V" mt={17} reload />
                  <AxesRow>
                    <CheckBox />
                    Axes Grid
                    <PushBtn $w={214} $h={31} $m="0 1px 0 auto">Edit</PushBtn>
                  </AxesRow>
                  <SectionHead>Camera Orientation Widget</SectionHead>
                  <Check>Visible</Check>
                  <Rule />
                  <Check>Center Axes Visibility</Check>
                  <ClipHead>Orientation Axes</ClipHead>
                </Content>
                <Scrollbar>
                  <ScrollEnd><CaretUp $c="#d6d8da" /></ScrollEnd>
                  <ScrollHandle />
                  <ScrollTrack />
                  <ScrollEnd><Caret $c="#d6d8da" /></ScrollEnd>
                </Scrollbar>
              </ScrollWrap>
            </Props>
          </LeftDock>
          <VSplit><VDots /></VSplit>
          <Center>
            <ViewTabs>
              <ViewTab>
                <TabIcon />
                Layout #1
                {closeIcon(18)}
              </ViewTab>
              <AddTab>+</AddTab>
            </ViewTabs>
            <RenderBar>
              {render.map((v, i) => {
                if (v === 'sep') return <Sep key={i} />
                if (v === 'sep6') return <Sep key={i} $w={6} />
                if (v === '3D') return <ThreeD key={i}>3D</ThreeD>
                return <Slot key={i} $w={32.5}><Svg s={24}>{v}</Svg></Slot>
              })}
              <ViewName>RenderView1</ViewName>
              <ViewBtns>
                <PushBtn $w={30} $h={29}><svg width="16" height="16" viewBox="0 0 16 16"><path d="M0 0h7.500v16H0zM8.500 0H16v16H8.500z" fill="#d4d9ef" /></svg></PushBtn>
                <PushBtn $w={30} $h={29}><svg width="16" height="16" viewBox="0 0 16 16"><path d="M0 0h16v7.500H0zM0 8.500h16V16H0z" fill="#d4d9ef" /></svg></PushBtn>
                <PushBtn $w={30} $h={29}><svg width="20" height="20" viewBox="0 0 20 20"><rect width="20" height="20" fill="#33383c" /><rect x="2" y="4" width="16" height="14" fill="#454a4e" /></svg></PushBtn>
                <PushBtn $w={30} $h={29}>{closeIcon(18)}</PushBtn>
              </ViewBtns>
            </RenderBar>
            <Viewport>
              <AxesOverlay width="100" height="100" viewBox="0 0 100 100">
                <path d="M20 78V20" stroke="#e8e44a" strokeWidth="1.500" />
                <path d="M20 6l5 14H15z" fill="#e8e000" />
                <path d="M15 20h10" stroke="#222" strokeWidth="1.500" />
                <path d="M20 78h60" stroke="#e81010" strokeWidth="1.500" />
                <path d="M93 78l-14 5V73z" fill="#e00000" />
                <path d="M79 73v10" stroke="#222" strokeWidth="1.500" />
                <circle cx="20" cy="78" r="6.500" fill="#066206" />
                <text x="23" y="21">Y</text>
                <text x="25" y="78">Z</text>
                <text x="81" y="80">X</text>
              </AxesOverlay>
            </Viewport>
          </Center>
        </Main>
        <Status>
          <StatusClose>
            <Svg s={12}><path d="M6 6l20 20M26 6L6 26" stroke="#9a9ea2" strokeWidth="7" /></Svg>
          </StatusClose>
          <StatusMsg />
          <Memory>
            <MemoryFill />
            <MemoryText>localhost.localdomain: 12.8 GiB/62.5 GiB 20.5%</MemoryText>
          </Memory>
          <ResizeGrip width="15" height="15" viewBox="0 0 15 15">
            <path d="M12 2h2v2h-2zM8 6h2v2H8zM12 6h2v2h-2zM4 10h2v2H4zM8 10h2v2H8zM12 10h2v2h-2z" fill="#7c8084" />
          </ResizeGrip>
        </Status>
      </Win>
    </Page>
  )
}
